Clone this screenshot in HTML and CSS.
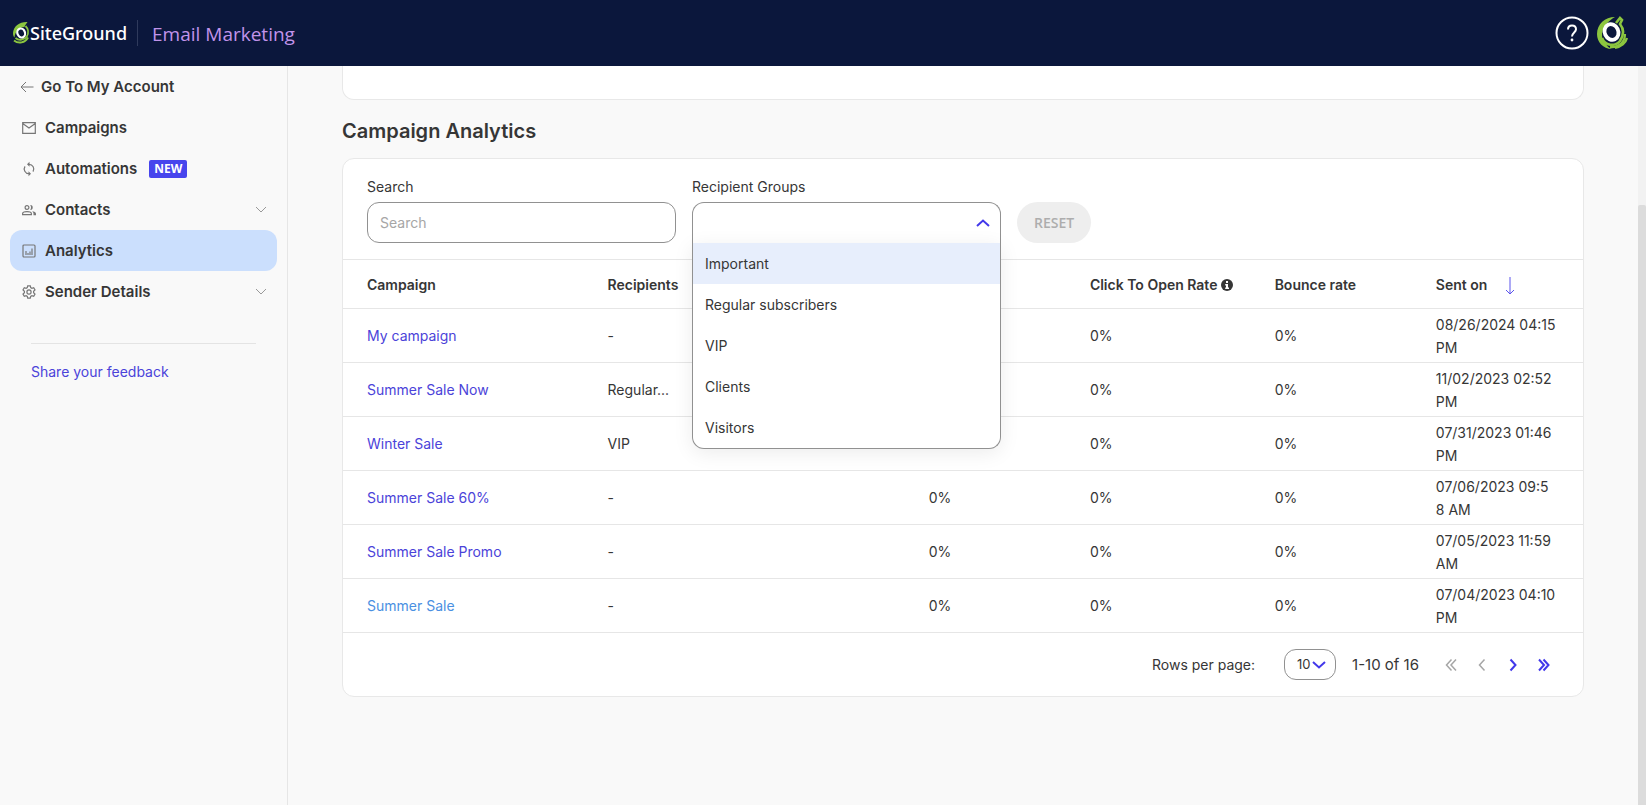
FILE: index.html
```
<!DOCTYPE html>
<html lang="en">
<head>
<meta charset="utf-8">
<title>Email Marketing</title>
<link rel="stylesheet" href="styles.css">
</head>
<body>
<header class="topbar">
  <a class="logo" href="#">
    <svg class="logo-mark" viewBox="0 0 18 24" aria-hidden="true">
      <path d="M15.500 1C8 .5 1.500 5 1 12c0 2 .6 3.500 1.500 4.500C3 11 7 6.500 12.500 6L13 4.500z" fill="#8cc63f"/>
      <path d="M13.500 5c2.800 2.700 3.400 7 1.300 10.500C12.500 19 7 20 3.500 17" fill="none" stroke="#8cc63f" stroke-width="1.800"/>
      <path d="M2 19.500c4.500 3.500 11 2.500 14-3" fill="none" stroke="#8cc63f" stroke-width="2"/>
      <ellipse cx="9.200" cy="12" rx="3.800" ry="4.600" transform="rotate(-22 9.200 12)" fill="none" stroke="#fff" stroke-width="2.200"/>
    </svg>
    <span class="logo-word">SiteGround</span>
  </a>
  <span class="product">Email Marketing</span>
  <div class="top-actions">
    <button class="help" type="button" aria-label="Help">
      <svg viewBox="0 0 34 34"><circle cx="17" cy="17" r="15.500"/><path d="M13 13.500c0-2.500 1.700-4 4-4s4 1.600 4 3.800c0 3-4 3.400-4 7.200"/><circle class="dot" cx="17" cy="24" r="1.400"/></svg>
    </button>
    <button class="avatar" type="button" aria-label="Account">
      <svg viewBox="0 0 32 34">
        <path d="M19 1C9 1 1 8 1 18c0 8 6 15 15 15-3-1-5-3-6-5C3 22 5 9 19 1z" fill="#8cc63f"/>
        <path d="M6 22c3 8 13 9 18 3 4-6 4-12 0-17l2-4-2-2-4 5" fill="none" stroke="#8cc63f" stroke-width="2.600"/>
        <path d="M14 31c9 1 15-5 15-13M19 32c6-1 11-5 12-10" fill="none" stroke="#8cc63f" stroke-width="2.200"/>
        <ellipse cx="15.500" cy="16" rx="6.800" ry="8" transform="rotate(-25 15.500 16)" fill="#0b173c" stroke="#fff" stroke-width="3.800"/>
      </svg>
    </button>
  </div>
</header>
<div class="shell">
  <nav class="sidebar" aria-label="Main">
    <a class="nav-item back" href="#"><svg class="icon" viewBox="0 0 14 14"><path d="M13.500 7H1M6 2L1 7l5 5"/></svg>Go To My Account</a>
    <a class="nav-item" href="#"><svg class="icon" viewBox="0 0 14 14"><path d="M.7 1.700h12.600v10.600H.7zM.7 2.500L7 7l6.300-4.500"/></svg>Campaigns</a>
    <a class="nav-item" href="#"><svg class="icon" viewBox="0 0 14 14"><path d="M7 2.300a4.800 4.800 0 0 1 4 7.400M7 11.700a4.800 4.800 0 0 1-4-7.400"/><path class="solid" d="M7.500-.2v5L5 2.300zM6.500 9.200v5L9 11.700z"/></svg>Automations<span class="badge">NEW</span></a>
    <a class="nav-item" href="#"><svg class="icon" viewBox="0 0 14 14"><circle cx="5" cy="4.500" r="1.900"/><path d="M.6 11.600v-.9c0-1.300 2.600-2 4.400-2s4.400.7 4.400 2v.9z"/><path class="solid" d="M8.200 2c3.400-.4 3.400 5.400 0 5 1.100-1.500 1.100-3.500 0-5zM10 8.200c2.200.3 4 1 4 2.500v1.500h-2.500v-1.500c0-1-.5-1.800-1.500-2.500z"/></svg>Contacts<svg class="caret" viewBox="0 0 12 7"><path d="M1 1l5 5 5-5"/></svg></a>
    <a class="nav-item active" href="#" aria-current="page"><svg class="icon" viewBox="0 0 14 14"><rect x="1" y="1" width="12" height="12" rx="1"/><path d="M4 7v4M6 9v2M8 7.500V11M10 4.500V11"/></svg>Analytics</a>
    <a class="nav-item" href="#"><svg class="icon" viewBox="0 0 14 14"><circle cx="7" cy="7" r="2.100"/><path d="M5.700.8h2.600l.4 1.800 1.200.7 1.800-.6L13 5l-1.400 1.300v1.400L13 9l-1.300 2.300-1.800-.6-1.200.7-.4 1.800H5.700l-.4-1.800-1.200-.7-1.800.6L1 9l1.400-1.300V6.300L1 5l1.300-2.300 1.800.6 1.200-.7z"/></svg>Sender Details<svg class="caret" viewBox="0 0 12 7"><path d="M1 1l5 5 5-5"/></svg></a>
    <hr class="divider">
    <a class="feedback" href="#">Share your feedback</a>
  </nav>
  <main class="content">
    <section class="card previous"></section>
    <h1 class="title">Campaign Analytics</h1>
    <section class="card">
      <form class="filters">
        <div class="field">
          <label for="search">Search</label>
          <input class="control" id="search" type="text" placeholder="Search">
        </div>
        <div class="field">
          <label for="groups">Recipient Groups</label>
          <div class="dropdown">
            <select class="control" id="groups"><option></option></select>
            <svg class="chevron" viewBox="0 0 14 8"><path d="M1 7l6-5.500L13 7"/></svg>
            <ul class="menu" role="listbox" aria-label="Recipient Groups">
              <li class="option hover" role="option">Important</li>
              <li class="option" role="option">Regular subscribers</li>
              <li class="option" role="option">VIP</li>
              <li class="option" role="option">Clients</li>
              <li class="option" role="option">Visitors</li>
            </ul>
          </div>
        </div>
        <button class="reset" type="reset" disabled>RESET</button>
      </form>
      <table class="table">
        <colgroup><col class="c-name"><col class="c-to"><col class="c-open"><col class="c-click"><col class="c-bounce"><col class="c-sent"></colgroup>
        <thead>
          <tr><th>Campaign</th><th>Recipients</th><th></th><th>Click To Open Rate <svg class="info" viewBox="0 0 12 12"><circle cx="6" cy="6" r="6"/><path d="M5 2h2v2H5zM4.200 5H7v3.500h1V10H4.200V8.500H5v-2h-.8z" fill="#fff"/></svg></th><th>Bounce rate</th><th>Sent on <svg class="sort" viewBox="0 0 10 18"><path d="M5 0v17M1 13l4 4 4-4"/></svg></th></tr>
        </thead>
        <tbody>
          <tr><td><a href="#">My campaign</a></td><td>-</td><td></td><td>0%</td><td>0%</td><td>08/26/2024 04:15<br>PM</td></tr>
          <tr><td><a href="#">Summer Sale Now</a></td><td>Regular...</td><td></td><td>0%</td><td>0%</td><td>11/02/2023 02:52<br>PM</td></tr>
          <tr><td><a href="#">Winter Sale</a></td><td>VIP</td><td></td><td>0%</td><td>0%</td><td>07/31/2023 01:46<br>PM</td></tr>
          <tr><td><a href="#">Summer Sale 60%</a></td><td>-</td><td>0%</td><td>0%</td><td>0%</td><td>07/06/2023 09:5<br>8 AM</td></tr>
          <tr><td><a href="#">Summer Sale Promo</a></td><td>-</td><td>0%</td><td>0%</td><td>0%</td><td>07/05/2023 11:59<br>AM</td></tr>
          <tr><td><a class="lit" href="#">Summer Sale</a></td><td>-</td><td>0%</td><td>0%</td><td>0%</td><td>07/04/2023 04:10<br>PM</td></tr>
        </tbody>
      </table>
      <div class="pager">
        <label for="rows">Rows per page:</label>
        <div class="rows">
          <select id="rows"><option>10</option></select>
          <svg class="chevron" viewBox="0 0 14 8"><path d="M1 1l6 5.500L13 1"/></svg>
        </div>
        <span class="range">1-10 of 16</span>
        <div class="pages">
          <button type="button" aria-label="First page" disabled><svg viewBox="0 0 12 14"><path d="M6.500 1.500L1.500 7l5 5.500M11 1.500L6 7l5 5.500"/></svg></button>
          <button type="button" aria-label="Previous page" disabled><svg viewBox="0 0 12 14"><path d="M8.500 1.500L3.500 7l5 5.500"/></svg></button>
          <button type="button" aria-label="Next page"><svg viewBox="0 0 12 14"><path d="M3.500 1.500L8.500 7l-5 5.500"/></svg></button>
          <button type="button" aria-label="Last page"><svg viewBox="0 0 12 14"><path d="M1 1.500L6 7l-5 5.500M5.500 1.500l5 5.500-5 5.500"/></svg></button>
        </div>
      </div>
    </section>
  </main>
  <div class="scrollbar"><div class="thumb"></div></div>
</div>
</body>
</html>
```

FILE: styles.css
```
* { box-sizing: border-box; }

body {
  margin: 0;
  height: 100vh;
  display: flex;
  flex-direction: column;
  overflow: hidden;
  background: #f9f9f9;
  color: #363636;
  font: 14px/23px Inter, "Liberation Sans", sans-serif;
}

a { color: #4b43d9; text-decoration: none; }
button, input, select { font: inherit; color: inherit; }
button { border: 0; background: none; padding: 0; }
svg { fill: none; stroke: currentColor; flex: none; }

.topbar {
  flex: none;
  height: 66px;
  padding: 0 18px 0 12px;
  display: flex;
  align-items: center;
  background: #0b173c;
}
.logo {
  display: flex;
  align-items: center;
  height: 26px;
  padding-right: 10px;
  border-right: 1px solid #2f3a5c;
  color: #fff;
}
.logo-mark { width: 18px; height: 24px; stroke: none; }
.logo-word { font: 500 18px/24px "Noto Sans", sans-serif; }
.product {
  margin-left: 14px;
  padding-top: 2px;
  color: #c193ea;
  font: 19px/26px "Open Sans", sans-serif;
}
.top-actions { display: flex; gap: 7px; margin-left: auto; }
.help, .avatar { width: 34px; height: 34px; color: #fff; }
.help svg, .avatar svg { display: block; width: 100%; height: 100%; }
.help svg { stroke-width: 2; }
.help .dot { fill: #fff; stroke: none; }
.avatar { width: 32px; }
.avatar svg { stroke: none; }

.shell { flex: 1; min-height: 0; display: flex; }

.sidebar {
  flex: none;
  width: 288px;
  padding: 0 10px;
  border-right: 1px solid #e6e6e6;
}
.nav-item {
  display: flex;
  align-items: center;
  height: 41px;
  padding: 0 10px 0 12px;
  border-radius: 12px;
  color: #363636;
  font-size: 15px;
  font-weight: 600;
}
.nav-item.active { background: #cbdffd; }
.nav-item.back { padding-left: 10px; }
.icon { width: 14px; height: 14px; margin-right: 9px; color: #777; stroke-width: 1.2; overflow: visible; }
.back .icon { stroke-width: 1; margin-right: 7px; }
.icon .solid, .info { fill: currentColor; stroke: none; }
.badge {
  margin-left: 12px;
  padding: 0 5px;
  border-radius: 2px;
  background: #4745ed;
  color: #fff;
  font: 700 12px/18px "Open Sans", sans-serif;
}
.caret { width: 12px; height: 7px; margin-left: auto; color: #999; }
.divider {
  margin: 31px 21px 16px;
  border: 0;
  border-top: 1px solid #e4e4e4;
}
.feedback { display: block; margin-left: 21px; }

.content { flex: 1; min-width: 0; padding: 0 54px; }
.card {
  background: #fff;
  border: 1px solid #e8e8e8;
  border-radius: 12px;
}
.previous { height: 34px; border-top: 0; border-radius: 0 0 12px 12px; }
.title { margin: 17px 0 13px; font-size: 20px; line-height: 28px; font-weight: 600; }

.filters {
  display: flex;
  align-items: flex-end;
  gap: 16px;
  padding: 16px 24px;
}
.field { width: 309px; }
.field label { display: block; margin-bottom: 4px; }
.control {
  display: block;
  width: 100%;
  height: 41px;
  padding: 0 12px;
  border: 1px solid #919191;
  border-radius: 12px;
  background: #fff;
  outline: 0;
  appearance: none;
}
.control::placeholder { color: #a6a6a6; opacity: 1; }
.dropdown { position: relative; }
.dropdown .control { border-bottom: 0; border-radius: 12px 12px 0 0; }
.chevron { width: 14px; height: 8px; color: #4238ea; stroke-width: 2; pointer-events: none; }
.dropdown .chevron { position: absolute; top: 17px; right: 11px; }
.menu {
  position: absolute;
  z-index: 2;
  top: 41px;
  left: 0;
  right: 0;
  margin: 0;
  padding: 0;
  overflow: hidden;
  list-style: none;
  background: #fff;
  border: 1px solid #919191;
  border-top: 0;
  border-radius: 0 0 12px 12px;
  box-shadow: 0 4px 20px rgba(0, 0, 0, .08);
}
.option { height: 41px; padding: 0 12px; line-height: 41px; }
.option.hover { background: #e7eefc; }
.reset {
  height: 41px;
  padding: 0 17px;
  border-radius: 21px;
  background: #eee;
  color: #adadad;
  font: 600 14px/20px "Open Sans", sans-serif;
}

.table { width: 100%; border-collapse: collapse; table-layout: fixed; }
.table th, .table td {
  padding: 0 0 0 24px;
  height: 54px;
  border-top: 1px solid #e6e6e6;
  text-align: left;
  white-space: nowrap;
}
.table th { height: 49px; font-weight: 600; }
.table tbody tr:last-child td { border-bottom: 1px solid #e6e6e6; }
.c-name { width: 19.4%; }
.c-to { width: 25.9%; }
.c-open { width: 13%; }
.c-click { width: 14.9%; }
.c-bounce { width: 13%; }
.lit { color: #4a90e2; }
.info { width: 12px; height: 12px; vertical-align: -1px; }
.sort { width: 10px; height: 18px; margin-left: 14px; vertical-align: middle; color: #5b54ec; }

.pager {
  display: flex;
  align-items: center;
  justify-content: flex-end;
  padding: 16px 33px 16px 24px;
}
.rows { position: relative; margin: 0 16px 0 29px; }
.rows select {
  display: block;
  width: 52px;
  height: 31px;
  padding: 0 12px;
  border: 1px solid #919191;
  border-radius: 12px;
  background: #fff;
  font-size: 13px;
  appearance: none;
}
.rows .chevron { position: absolute; top: 12px; right: 10px; }
.range { font-size: 15px; }
.pages { display: flex; gap: 19px; margin-left: 26px; }
.pages button { width: 12px; height: 14px; color: #4238ea; }
.pages button:disabled { color: #a6a6a6; }
.pages svg { display: block; width: 12px; height: 14px; stroke-width: 2; }
.pages button:disabled svg { stroke-width: 1.5; }

.scrollbar { flex: none; width: 8px; background: #f2f2f2; padding-top: 139px; }
.thumb { height: 100%; background: #dcdcdc; border-radius: 2px 2px 0 0; }
```
